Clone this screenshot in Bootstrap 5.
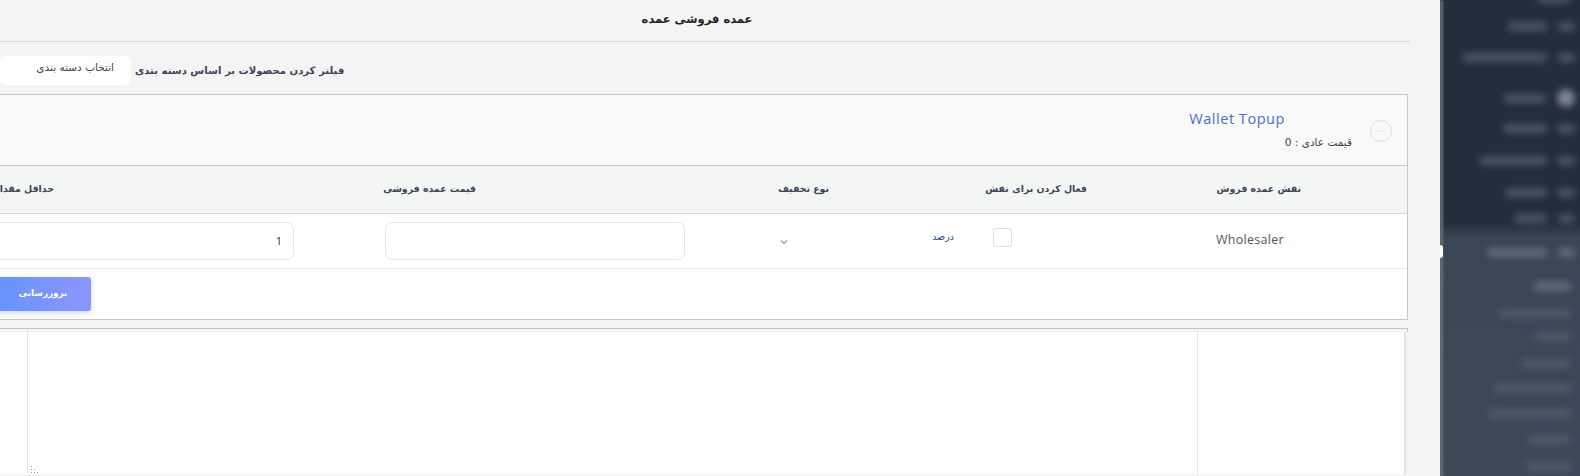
<!DOCTYPE html>
<html lang="fa" dir="rtl">
<head>
<meta charset="utf-8">
<title>عمده فروشی عمده</title>
<link href="https://cdn.jsdelivr.net/npm/bootstrap@5.3.0/dist/css/bootstrap.min.css" rel="stylesheet">
<style>
html,body{height:476px;overflow:hidden}
body{background:#f4f4f5;font-family:"DejaVu Sans","Noto Sans",sans-serif;color:#3f4656}
.shell{height:476px;overflow:hidden}
.main-pane{flex:0 0 1440px;width:1440px;height:476px;overflow:hidden}
.content-wrap{margin-left:-16px;margin-right:30px}
.page-head{height:42px;border-bottom:1px solid #d8d8d8;color:#1f2229;font-size:11.5px;font-weight:700;line-height:38px;text-align:center}
.filter-row{height:52px;padding-top:14px;margin-left:16px;justify-content:flex-end}
.cat-select{width:131px;height:29px;margin-right:4px;background:#fff;border-radius:5px;font-size:10.5px;color:#444;padding:4px 17px 0 0;line-height:14px}
.filter-label{font-size:10.1px;font-weight:700;color:#3d4555;line-height:29px;padding-top:0;white-space:nowrap}
.wallet-card{margin-right:2px;margin-left:3px;border:1px solid #c6c6c6;border-radius:0;background:#fff;height:226px}
.wallet-head{height:71px;background:#f9f9f9;border-bottom:1px solid #c9c9c9;border-radius:0!important;padding:0}
.circle-ico{width:22px;height:22px;margin:25px 15px 0 0;border:1px solid #e0e0e0;border-radius:50%;flex:none}
.title-block{margin-right:18px;padding-top:13px;flex:1}
.wallet-name{font-family:"Open Sans","Noto Sans",sans-serif;font-size:14.6px;color:#4d6fc4;line-height:20px;margin-right:67px;letter-spacing:.5px;direction:ltr;text-align:right}
.wallet-name span{display:inline-block}
.wallet-price{font-size:10.5px;color:#3a3f4a;line-height:16px;margin-top:6px}
.wallet-table{table-layout:fixed;width:100%;margin:0;font-size:11px;border-color:#dcdcdc}
.wallet-table th{height:47px;background:#f4f5f5;color:#3d4555;font-size:9.4px;font-weight:700;vertical-align:middle;padding:0;border-bottom:1px solid #d6d6d6;text-align:right;white-space:nowrap}
.wallet-table td{height:55px;padding:0;vertical-align:middle;border-bottom:1px solid #e4e4e4;background:#fff}
.wallet-table .c1{width:296px}.wallet-table .c2{width:145px}.wallet-table .c3{width:265px}.wallet-table .c4{width:390px}
.pad1{padding-right:106px!important}
.pad2{padding-right:24px!important}
.pad3{padding-right:137px!important}
.pad4{padding-right:225px!important}
.pad5{padding-right:257px!important}
.role-cell{padding-right:123px!important;font-family:"Open Sans","Noto Sans",sans-serif;font-size:12.5px;color:#50555f;letter-spacing:.3px}
.check-cell{padding-right:99px!important}
.role-check{width:19px;height:19px;margin:0 0 7px;border:1px solid #dedede;border-radius:1px;background:#fff;float:none;display:block}
.type-box{position:relative;height:37px;padding-right:12px;font-size:9.5px;color:#1d4566;line-height:30px}
.chev{position:absolute;left:78px;top:15px;width:10px;height:10px}
.price-cell{padding-right:16px!important}
.qty-cell{padding-right:17px!important}
.soft-input{height:38px;border:1px solid #e6e6e6;border-radius:7px;font-size:11px;color:#2c2f36;font-family:"Open Sans",sans-serif;box-shadow:none;padding:0 11px}
.price-input{width:300px}
.wallet-foot{background:#fff;border:0;padding:8px 0 0 7px;justify-content:flex-end}
.update-btn{width:96px;height:34px;border:0;border-radius:3px;background:linear-gradient(90deg,#6794fb,#8c96fd);color:#fff;font-size:8.8px;font-weight:700;box-shadow:0 2px 5px rgba(100,120,200,.3);padding:0}
.editor-shell{margin:8px 2px 0 3px;border-top:1px solid #c6c6c6;height:146px}
.editor-tick{height:3px;border-right:1px solid #c6c6c6}
.editor-row{height:142px;background:#fff;margin-right:2px}
.edge-shadow{width:2px;background:#e6e6e6;flex:none}
.ed-a{width:207px;border-left:1px solid #e3e3e3;flex:none}
.ed-b{flex:1;border-left:1px solid #e3e3e3;position:relative}
.ed-c{width:40px;flex:none}
.grip{position:absolute;left:2px;bottom:1px;width:8px;height:7px}
.side-pane{flex:0 0 140px;width:140px;height:476px;background:linear-gradient(180deg,#232d3c 0,#232d3d 222px,#3a4556 238px,#3d4859 100%);position:relative;overflow:hidden}
.edge-strip{position:absolute;inset:0 auto 0 0;width:3px;background:#66717d;filter:blur(1px)}
.notch{position:absolute;inset:245px auto auto -4px;width:7px;height:13px;background:#fff;border-radius:3px}
.blur-menu{filter:blur(3.5px)}
.m-row{display:flex;gap:11px;padding-right:5px;align-items:flex-start}
.m-plain{padding-right:9px}
.m-ico,.m-txt{display:block;height:9px;background:#525c6a;opacity:.85;border-radius:4px}
.m-ico{width:17px}
.m-bright{background:#8d959c;height:18px;width:18px;margin-top:-5px;border-radius:50%}
.stub-bar{margin-top:-6px;margin-right:5px}
.w33{width:33px}.w37{width:37px}.w39{width:39px}.w42{width:42px}.w43{width:43px}.w44{width:44px}.w45{width:45px}.w50{width:50px}.w60{width:60px}.w67{width:67px}.w72{width:72px}.w77{width:77px}.w82{width:82px}.w84{width:84px}
.h22{height:22px}.h23{height:23px}.h25{height:25px}.h26{height:26px}.h27{height:27px}.h30{height:30px}.h31{height:31px}.h32{height:32px}.h34{height:34px}.h41{height:41px}
.lite{background:#67717f}
</style>
</head>
<body>
<div class="shell d-flex">
  <aside class="side-pane">
    <div class="blur-menu">
      <div class="m-row h22"><span class="m-txt w33 stub-bar"></span></div>
      <div class="m-row h31"><span class="m-ico"></span><span class="m-txt w39"></span></div>
      <div class="m-row h41"><span class="m-ico"></span><span class="m-txt w84"></span></div>
      <div class="m-row h30"><span class="m-ico m-bright"></span><span class="m-txt w42"></span></div>
      <div class="m-row h32"><span class="m-ico"></span><span class="m-txt w44"></span></div>
      <div class="m-row h32"><span class="m-ico"></span><span class="m-txt w67"></span></div>
      <div class="m-row h26"><span class="m-ico"></span><span class="m-txt w42"></span></div>
      <div class="m-row h34"><span class="m-ico"></span><span class="m-txt w33"></span></div>
      <div class="m-row h34"><span class="m-ico lite"></span><span class="m-txt w60 lite"></span></div>
      <div class="m-row m-plain h27"><span class="m-txt w37 lite"></span></div>
      <div class="m-row m-plain h23"><span class="m-txt w72"></span></div>
      <div class="m-row m-plain h27"><span class="m-txt w37"></span></div>
      <div class="m-row m-plain h25"><span class="m-txt w50"></span></div>
      <div class="m-row m-plain h25"><span class="m-txt w77"></span></div>
      <div class="m-row m-plain h26"><span class="m-txt w82"></span></div>
      <div class="m-row m-plain h27"><span class="m-txt w43"></span></div>
      <div class="m-row m-plain h27"><span class="m-txt w45"></span></div>
    </div>
    <span class="edge-strip"></span>
    <span class="notch"></span>
  </aside>
  <main class="main-pane">
    <div class="content-wrap">
      <h1 class="page-head m-0">عمده فروشی عمده</h1>
      <div class="filter-row d-flex">
        <span class="filter-label">فیلتر کردن محصولات بر اساس دسته بندی</span>
        <div class="cat-select">انتخاب دسته بندی</div>
      </div>
      <div class="card wallet-card">
        <div class="card-header wallet-head d-flex">
          <span class="circle-ico d-flex align-items-center justify-content-center"><svg width="8" height="2" viewBox="0 0 8 2"><path d="M0 1H8" stroke="#e2e2e2"/></svg></span>
          <div class="title-block">
            <div class="wallet-name"><span>Wallet Topup</span></div>
            <div class="wallet-price">قیمت عادی : 0</div>
          </div>
        </div>
        <table class="table wallet-table">
          <colgroup><col class="c1"><col class="c2"><col class="c3"><col class="c4"><col></colgroup>
          <thead>
            <tr>
              <th class="pad1">نقش عمده فروش</th>
              <th class="pad2">فعال کردن برای نقش</th>
              <th class="pad3">نوع تخفیف</th>
              <th class="pad4">قیمت عمده فروشی</th>
              <th class="pad5">حداقل مقدار</th>
            </tr>
          </thead>
          <tbody>
            <tr>
              <td class="role-cell">Wholesaler</td>
              <td class="check-cell"><input class="form-check-input role-check" type="checkbox" aria-label="فعال"></td>
              <td><div class="type-box">درصد<svg class="chev" viewBox="0 0 10 10"><path d="M2 3.5 5 6.5 8 3.5" fill="none" stroke="#444" stroke-width="1"/></svg></div></td>
              <td class="price-cell"><input class="form-control soft-input price-input" type="text" aria-label="قیمت"></td>
              <td class="qty-cell"><input class="form-control soft-input" type="text" value="1" aria-label="مقدار"></td>
            </tr>
          </tbody>
        </table>
        <div class="card-footer wallet-foot d-flex">
          <button class="btn update-btn" type="button">بروزرسانی</button>
        </div>
      </div>
      <div class="editor-shell">
        <div class="editor-tick"></div>
        <div class="editor-row d-flex">
          <span class="edge-shadow"></span>
          <div class="ed-a"></div>
          <div class="ed-b">
            <svg class="grip" viewBox="0 0 8 7"><g fill="#999"><rect x="1" y="0" width="1" height="1"/><rect x="1" y="3" width="1" height="1"/><rect x="4" y="3" width="1" height="1"/><rect x="1" y="6" width="1" height="1"/><rect x="4" y="6" width="1" height="1"/><rect x="7" y="6" width="1" height="1"/></g></svg>
          </div>
          <div class="ed-c"></div>
        </div>
      </div>
    </div>
  </main>
</div>
<script src="https://cdn.jsdelivr.net/npm/bootstrap@5.3.0/dist/js/bootstrap.bundle.min.js"></script>
</body>
</html>
